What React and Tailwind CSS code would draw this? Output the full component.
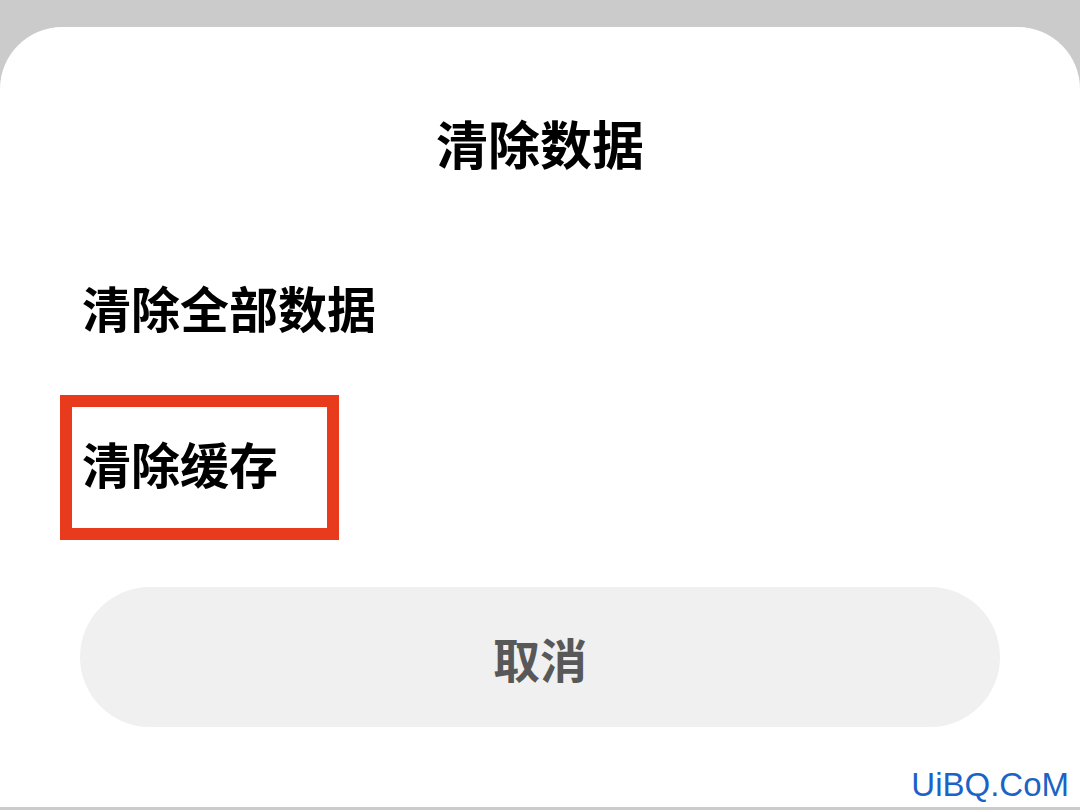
import React from "react";

const cjk = { fontFamily: '"Noto Sans CJK SC", "Noto Sans", sans-serif' };

function OptionRow({ label, highlighted }) {
    return (
        <div className="relative pl-[82px]">
            {highlighted && (
                // annotation frame drawn over the row
                <div className="pointer-events-none absolute left-[60px] top-[-38px] h-[145px] w-[279px] border-[12px] border-[#e83b1e]" />
            )}
            <p className="text-[49px] font-semibold leading-[60px] text-black" style={cjk}>
                {label}
            </p>
        </div>
    );
}

export default function App() {
    return (
        <div className="flex h-[810px] w-[1080px] flex-col bg-[#cbcbcb]">
            <div className="h-[27px] shrink-0" />

            <div className="flex flex-1 flex-col rounded-t-[62px] bg-white">
                <h1 className="pt-[86px] text-center text-[52px] font-semibold leading-[60px] text-black" style={cjk}>
                    清除数据
                </h1>

                <div className="mt-[104px] flex flex-col gap-[96px]">
                    <OptionRow label="清除全部数据" />
                    <OptionRow label="清除缓存" highlighted />
                </div>

                <button
                    type="button"
                    className="mx-[80px] mt-[94px] flex h-[140px] items-center justify-center rounded-full bg-[#f0f0f0]"
                >
                    <span className="text-[47px] font-semibold leading-none text-[#585858]" style={cjk}>
                        取消
                    </span>
                </button>

                <div className="mt-[40px] flex justify-end pr-[11px]">
                    <span
                        className="text-[33px] leading-[36px] text-[#1b63c6]"
                        style={{ fontFamily: '"Liberation Sans", Arial, sans-serif' }}
                    >
                        UiBQ.CoM
                    </span>
                </div>
            </div>

            <div className="h-[3px] shrink-0" />
        </div>
    );
}
